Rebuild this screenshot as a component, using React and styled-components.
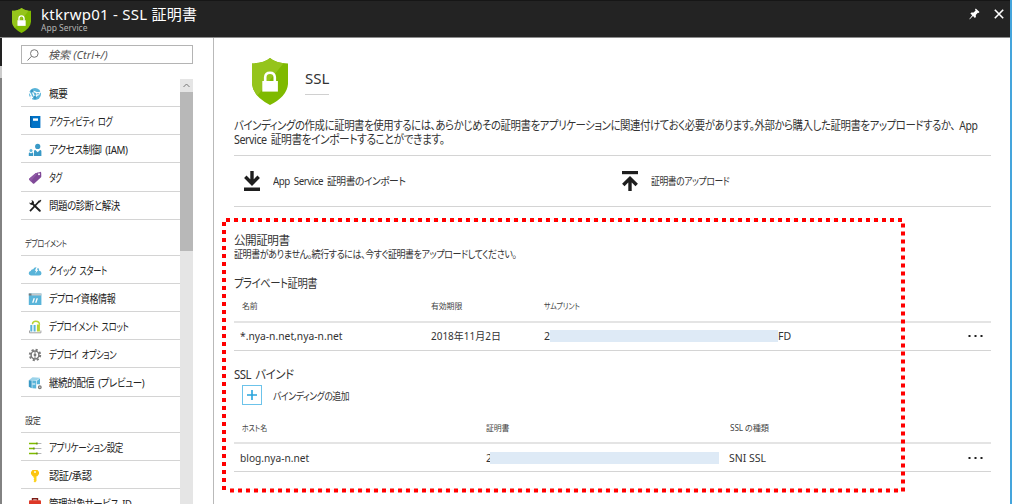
import styled, { createGlobalStyle } from "styled-components"

const menu = [
  {
    items: [
      { icon: 'overview', label: '概要', scale: 0.87 },
      { icon: 'log', label: 'アクティビティ ログ', scale: 0.74 },
      { icon: 'iam', label: 'アクセス制御 (IAM)', scale: 0.89 },
      { icon: 'tag', label: 'タグ', scale: 0.7 },
      { icon: 'tools', label: '問題の診断と解決', scale: 0.86 },
    ],
  },
  {
    title: 'デプロイメント',
    scale: 0.79,
    items: [
      { icon: 'cloud', label: 'クイック スタート', scale: 0.75 },
      { icon: 'credentials', label: 'デプロイ資格情報', scale: 0.82 },
      { icon: 'slots', label: 'デプロイメント スロット', scale: 0.755 },
      { icon: 'gear', label: 'デプロイ オプション', scale: 0.755 },
      { icon: 'delivery', label: '継続的配信 (プレビュー)', scale: 0.865 },
    ],
  },
  {
    title: '設定',
    scale: 0.9,
    items: [
      { icon: 'sliders', label: 'アプリケーション設定', scale: 0.775 },
      { icon: 'key', label: '認証/承認', scale: 0.93 },
      { icon: 'toolbox', label: '管理対象サービス ID', scale: 0.855 },
    ],
  },
]

const icons = {
  overview: (
    <>
      <circle cx='7' cy='7' r='6' fill='#59b4d9' />
      <path d='M3.8 3.6L10.6 6.4 6.8 10.6M3.800 3.600L6.800 10.600M10.600 6.400L13 4.500M6.800 10.600L2 10' stroke='#fff' strokeWidth='1.3' fill='none' />
      <path d='M1.300 5.200Q4 8.600 3.600 12' stroke='#fff' strokeWidth='1.2' fill='none' />
      <circle cx='10' cy='6.8' r='1.7' fill='#fff' />
      <circle cx='10' cy='6.8' r='.8' fill='#3999c6' />
      <circle cx='6.8' cy='10.4' r='1.6' fill='#3999c6' />
      <circle cx='4.2' cy='3.9' r='1.5' fill='#3999c6' />
    </>
  ),
  log: (
    <>
      <path d='M2 1h10.4v12H3.2L2 12z' fill='#0072c6' />
      <path d='M2 1h1.4v11H2z' fill='#005ba1' />
      <rect x='5' y='3.4' width='5' height='2.4' fill='#fff' />
    </>
  ),
  iam: (
    <>
      <circle cx='9.7' cy='3.4' r='2.6' fill='#3999c6' />
      <path d='M6 13V8.2q0-1.2 1.4-1.2l2.3 2.2L12 7q1.4 0 1.4 1.2V13z' fill='#3999c6' />
      <circle cx='3' cy='7.6' r='1.5' fill='#59b4d9' />
      <path d='M.8 13v-2.6q0-.9.9-.9l1.3 1.1 1.3-1.1q.9 0 .9.9V13z' fill='#3999c6' />
    </>
  ),
  tag: (
    <>
      <path d='M7.5 2.2l4.6-1.3q1-.2 1.1.8l.1 3.6q0 .7-.5 1.2l-6.5 6q-.8.7-1.4 0L1.2 8.8q-.6-.8.2-1.4z' fill='#804998' />
      <path d='M7.5 2.2L1.4 7.4q-.8.6-.2 1.4l1.6 1.7 7.4-9z' fill='#8f5aa6' />
      <circle cx='11' cy='3.2' r='1' fill='#fff' />
    </>
  ),
  tools: (
    <>
      <path d='M2 12.2L11.5 2' stroke='#1e1e1e' strokeWidth='1.7' />
      <path d='M4.2 4.4l7.6 7.4' stroke='#1e1e1e' strokeWidth='2' strokeLinecap='round' />
      <path d='M1.2 3.6Q1.4 6 4 6.1L6 4.2Q6.1 1.6 3.4 1.2L4.2 3 3 4.3z' fill='#1e1e1e' />
      <path d='M10.3 2.1L13 .8l.3.4-1.4 2.5z' fill='#1e1e1e' />
    </>
  ),
  cloud: (
    <>
      <path d='M3 11.4Q.7 11.3.7 9.2q0-2 2-2.2Q3.2 5 5.2 5.2 6.2 2.8 8.7 3.2q2.6.6 2.5 3.6 2.3.1 2.3 2.4 0 2.2-2.3 2.2z' fill='#59b4d9' />
      <path d='M8.8 2.5L6.8 6.8h1.5L7 10l3.4-4.2H8.8l1.8-3.3z' fill='#fff' />
    </>
  ),
  credentials: (
    <>
      <rect x='.8' y='1.5' width='12.6' height='11.5' fill='#59b4d9' />
      <path d='M.8 1.5h2.8v2H.8z' fill='#7a7a7a' />
      <path d='M3.6 1.5h9.8v2H3.6z' fill='#c5c9cb' />
      <path d='M6.3 6.2l-1.6 4.5M9.3 6.2l-1.6 4.5' stroke='#fff' strokeWidth='1.3' />
    </>
  ),
  slots: (
    <>
      <path d='M4.4 4.3Q4.6 1.3 7.8 1.3q3.6 0 3.7 3.5' fill='none' stroke='#b8d432' strokeWidth='1.4' />
      <path d='M2.3 5h2v6.5h-2zM5.6 5h2v6.5h-2z' fill='#59b4d9' />
      <path d='M8.9 4.5h3v7h-3z' fill='#b8d432' />
      <path d='M1.5 10.500v2.300h11.400v-2.300' fill='none' stroke='#a0a1a2' strokeWidth='1' />
    </>
  ),
  gear: (
    <>
      <circle cx='7' cy='7' r='5.2' fill='none' stroke='#7a7a7a' strokeWidth='2' strokeDasharray='2.1 1.98' />
      <circle cx='7' cy='7' r='3.9' fill='none' stroke='#7a7a7a' strokeWidth='1.5' />
      <circle cx='7' cy='7' r='1.4' fill='#7a7a7a' />
      <path d='M7 3v2.6M7 8.4V11' stroke='#7a7a7a' strokeWidth='1' />
    </>
  ),
  delivery: (
    <>
      <path d='M.8 4.2L4.5 1.2l7.5.6L8.2 4.8z' fill='#9bd3ea' />
      <path d='M.8 4.2l2.9.3v7.7L.8 10.8z' fill='#3999c6' />
      <path d='M4.3 4.6l3.9.3v7.5l-3.9-.2z' fill='#59b4d9' />
      <path d='M8.8 4.9L12 2.3v5.9H8.8z' fill='#59b4d9' />
      <path d='M4.3 8h3' stroke='#fff' strokeWidth='1' />
      <circle cx='11.8' cy='11.2' r='1.3' fill='none' stroke='#7a7a7a' strokeWidth='1.3' />
    </>
  ),
  sliders: (
    <>
      <path d='M1 2.5h12.4M1 7.5h12.4M1 12.5h12.4' stroke='#b4b6b8' strokeWidth='1' />
      <path d='M1 2.5h8M1 7.5h5M1 12.5h8' stroke='#7fba00' strokeWidth='1.6' />
      <path d='M9 1.5v2M6 6.5v2M9 11.5v2' stroke='#5d8a00' strokeWidth='1.2' />
    </>
  ),
  key: (
    <>
      <path d='M5.3 6h3.2v6.1L7 13.6l-1.5-1.4.8-1-.8-1 .8-1-1-1z' fill='#fcd116' />
      <path d='M4.5 1h5l1.5 2v2L9.300 7.200H4.700L3 5V3z' fill='#fcc40f' />
      <circle cx='7' cy='3' r='.9' fill='#fff' />
    </>
  ),
  toolbox: (
    <>
      <path d='M4.5 3.5V1.7h5v1.8' fill='none' stroke='#7d1c16' strokeWidth='1.4' />
      <rect x='1' y='3.3' width='12' height='9' rx='1' fill='#dd3827' />
      <path d='M1 7.3h12v1.2H1z' fill='#8c1d13' />
    </>
  ),
}

const Shield = ({ width, height }) => (
  <svg width={width} height={height} viewBox='0 0 36 47' preserveAspectRatio='none'>
    <path d='M18 0Q12 5.2 0 5.4V26Q1 38.5 18 47 35 38.5 36 26V5.4Q24 5.2 18 0z' fill='#7fba00' />
    <path d='M18 0Q12 5.2 0 5.4V26Q.5 32.5 5.5 37.5L31.5 5.2Q23 4.2 18 0z' fill='#95c41c' />
    <path d='M10.3 23h15.6v10.6H10.3z' fill='#fff' />
    <path d='M13.2 23.5v-4.3q.2-4.4 4.8-4.4t4.8 4.400v4.300' fill='none' stroke='#fff' strokeWidth='2.6' />
  </svg>
)

const Download = () => (
  <svg width='16' height='20' viewBox='0 0 16 20'>
    <path d='M8 0v12M1.3 5.8L8 12.5l6.7-6.7' fill='none' stroke='#1e1e1e' strokeWidth='3.4' />
    <path d='M0 16.5h16V20H0z' fill='#1e1e1e' />
  </svg>
)

const Upload = () => (
  <svg width='16' height='20' viewBox='0 0 16 20'>
    <path d='M0 0h16v3.2H0z' fill='#1e1e1e' />
    <path d='M8 20V8M1.3 14L8 7.3l6.7 6.7' fill='none' stroke='#1e1e1e' strokeWidth='3.4' />
  </svg>
)

const Dots = () => (
  <svg width='15' height='2' viewBox='0 0 15 2'>
    <path d='M.5 0h2v2h-2zM6.500 0h2v2h-2zM12.500 0h2v2h-2z' fill='#1e1e1e' />
  </svg>
)

const App = () => {
  return (
    <>
      <GlobalStyle />
      <Page>
        <Header>
          <Shield width={19} height={25} />
          <HeaderText>
            <HeaderTitle>ktkrwp01 - SSL 証明書</HeaderTitle>
            <HeaderSub>App Service</HeaderSub>
          </HeaderText>
          <HeaderIcons>
            <svg width='11' height='12' viewBox='0 0 11 12'>
              <path d='M6.8.5l3.7 3.6-.9.9-.8-.2-2 2.1.1 2.2-1 .9L4 8.1.8 11.3l-.4-.1.1-.4 2.7-3.5L1.4 5.5l1-1 2.2.1 2-2-.6-1z' fill='#fff' />
            </svg>
            <svg width='10' height='10' viewBox='0 0 10 10'>
              <path d='M.8.8l8.4 8.4M9.2.8L.8 9.2' stroke='#fff' strokeWidth='1.6' />
            </svg>
          </HeaderIcons>
        </Header>
        <Body>
          <Edge />
          <Sidebar>
            <Search>
              <svg width='12' height='12' viewBox='0 0 12 12'>
                <circle cx='7.3' cy='4.5' r='3.8' fill='none' stroke='#777' />
                <path d='M4.5 7.3L.5 11.5' stroke='#777' />
              </svg>
              <SearchText>検索 (Ctrl+/)</SearchText>
            </Search>
            <MenuArea>
              <Menu>
                {menu.map((group, i) => (
                  <div key={i}>
                    {group.title && (
                      <GroupTitle>
                        <Narrow $scale={group.scale}>{group.title}</Narrow>
                      </GroupTitle>
                    )}
                    {group.items.map((item) => (
                      <MenuItem key={item.label}>
                        <svg width='14' height='14' viewBox='0 0 14 14'>{icons[item.icon]}</svg>
                        <Narrow $scale={item.scale}>{item.label}</Narrow>
                      </MenuItem>
                    ))}
                  </div>
                ))}
              </Menu>
              <Scrollbar>
                <ScrollButton>
                  <svg width='7' height='5' viewBox='0 0 7 5'>
                    <path d='M.5 4l3-3 3 3' fill='none' stroke='#777' />
                  </svg>
                </ScrollButton>
                <Thumb />
              </Scrollbar>
            </MenuArea>
          </Sidebar>
          <Main>
            <Hero>
              <Shield width={36} height={47} />
              <HeroTitle>SSL</HeroTitle>
            </Hero>
            <Description>
              <Line $scale={0.868}>バインディングの作成に証明書を使用するには、あらかじめその証明書をアプリケーションに関連付けておく必要があります。外部から購入した証明書をアップロードするか、 App</Line>
              <Line $scale={0.895}>Service 証明書をインポートすることができます。</Line>
            </Description>
            <Commands>
              <Command>
                <Download />
                <Narrow $scale={0.93}>App Service 証明書のインポート</Narrow>
              </Command>
              <Command>
                <Upload />
                <Narrow $scale={0.84}>証明書のアップロード</Narrow>
              </Command>
            </Commands>

            <SectionTitle $top={26}><Narrow $scale={0.965}>公開証明書</Narrow></SectionTitle>
            <Note><Narrow $scale={0.86}>証明書がありません。続行するには、今すぐ証明書をアップロードしてください。</Narrow></Note>

            <SectionTitle $top={13}><Narrow $scale={0.86}>プライベート証明書</Narrow></SectionTitle>
            <HeadRow $cols='189px 113px 1fr' $height={32} $shift={-1}>
              <HeadCell $scale={0.93}>名前</HeadCell>
              <HeadCell $scale={0.93}>有効期限</HeadCell>
              <HeadCell $scale={0.82}>サムプリント</HeadCell>
            </HeadRow>
            <Row $cols='191px 113px 1fr 23px'>
              <Cell $scale={0.98}>*.nya-n.net,nya-n.net</Cell>
              <Cell $scale={0.95}>2018年11月2日</Cell>
              <Masked>2<Mask $width={228} />FD</Masked>
              <Dots />
            </Row>

            <SectionTitle $top={16}><Narrow $scale={0.95}>SSL バインド</Narrow></SectionTitle>
            <AddButton>
              <Plus>
                <svg width='10' height='10' viewBox='0 0 10 10'>
                  <path d='M5 0v10M0 5h10' stroke='#28a4dc' strokeWidth='1.6' />
                </svg>
              </Plus>
              <Narrow $scale={0.84}>バインディングの追加</Narrow>
            </AddButton>
            <HeadRow $cols='244px 244px 1fr' $height={38} $shift={2.5}>
              <HeadCell $scale={0.82}>ホスト名</HeadCell>
              <HeadCell $scale={0.93}>証明書</HeadCell>
              <HeadCell $scale={0.96}>SSL の種類</HeadCell>
            </HeadRow>
            <Row $cols='246px 243px 1fr 23px' $drop={2}>
              <Cell $scale={0.97}>blog.nya-n.net</Cell>
              <Masked>2<Mask $width={229} $pull={2} /></Masked>
              <span>SNI SSL</span>
              <Dots />
            </Row>
          </Main>
        </Body>
        <Highlight width='684' height='275' viewBox='0 0 684 275'>
          <path d='M4 2h677' />
          <path d='M2 4v269' />
          <path d='M681 5.5v269' />
          <path d='M8 272.5h669' />
        </Highlight>
      </Page>
    </>
  )
}

const GlobalStyle = createGlobalStyle`
  body {
    margin: 0;
    overflow: hidden;
    font-family: "Noto Sans", "Noto Sans CJK JP", sans-serif;
    font-feature-settings: "palt";
    color: #333;
  }

  * {
    box-sizing: border-box;
  }

  svg {
    display: block;
    flex-shrink: 0;
  }
`

const Narrow = styled.span`
  display: inline-block;
  transform: scaleX(${({ $scale }) => $scale});
  transform-origin: left center;
  letter-spacing: -0.5px;
  word-spacing: 2px;
`

const Page = styled.div`
  position: relative;
  display: flex;
  flex-direction: column;
  width: 1012px;
  height: 504px;
  overflow: hidden;
  background-color: #fff;
  border-right: 2px solid #45a5dc;
  white-space: nowrap;
`

const Header = styled.header`
  display: flex;
  align-items: center;
  gap: 10px;
  height: 38px;
  flex-shrink: 0;
  padding: 2px 6px 0 12px;
  background-color: #232323;
  border-top: 1px solid #161616;
  border-bottom: 1px solid #8c8c8c;
`

const HeaderText = styled.div`
  flex: 1;
  padding-bottom: 3px;
  color: #fff;
`

const HeaderTitle = styled.h1`
  margin: 0;
  font-size: 15px;
  font-weight: 400;
  line-height: 18px;
  letter-spacing: 0.25px;
`

const HeaderSub = styled.div`
  font-size: 8.5px;
  line-height: 10px;
  color: #b5b5b5;
`

const HeaderIcons = styled.div`
  display: flex;
  align-items: center;
  gap: 14px;
  padding-bottom: 12px;
`

const Body = styled.div`
  display: flex;
  flex: 1;
  min-height: 0;
`

const Edge = styled.div`
  width: 2px;
  flex-shrink: 0;
  background: linear-gradient(#222 28px, #ccc 28px, #ccc 40px, #828282 40px);
`

const Sidebar = styled.aside`
  display: flex;
  flex-direction: column;
  width: 212px;
  flex-shrink: 0;
  padding: 7px 20px 0 19px;
  border-right: 1px solid #b9b9b9;
`

const Search = styled.div`
  display: flex;
  align-items: center;
  gap: 9px;
  height: 19px;
  flex-shrink: 0;
  padding-left: 5px;
  border: 1px solid #b4b4b4;
`

const SearchText = styled.span`
  font-size: 11px;
  line-height: 17px;
  font-style: italic;
  letter-spacing: 0.1px;
  color: #555;
`

const MenuArea = styled.div`
  display: flex;
  flex: 1;
  min-height: 0;
  margin-top: 15px;
`

const Menu = styled.nav`
  flex: 1;
  overflow: hidden;
`

const MenuItem = styled.div`
  display: flex;
  align-items: center;
  gap: 7px;
  height: 28.15px;
  padding: 2.5px 0 0 7px;
  border-bottom: 1px solid #d4d4d4;
  font-size: 11px;
  line-height: 14px;
  color: #222;
`

const GroupTitle = styled.div`
  height: 36.2px;
  padding: 17px 0 0 4px;
  border-bottom: 1px solid #d4d4d4;
  font-size: 9px;
  line-height: 14px;
`

const Scrollbar = styled.div`
  width: 13px;
  flex-shrink: 0;
  background-color: #e5e5e5;
`

const ScrollButton = styled.div`
  display: flex;
  align-items: center;
  justify-content: center;
  height: 13px;
`

const Thumb = styled.div`
  height: 159px;
  background-color: #b8b8b8;
`

const Main = styled.main`
  flex: 1;
  min-width: 0;
  padding: 20px 19px 0 20px;
`

const Hero = styled.div`
  display: flex;
  gap: 17px;
  height: 61px;
  padding-left: 18px;
`

const HeroTitle = styled.h2`
  height: 37px;
  margin: 0;
  padding-top: 10px;
  border-bottom: 1px solid #d0d0d0;
  font-size: 15px;
  font-weight: 400;
  line-height: 20px;
`

const Description = styled.div`
  height: 36px;
  font-size: 12px;
  line-height: 14px;
`

const Line = styled(Narrow)`
  display: block;
`

const Commands = styled.div`
  display: grid;
  grid-template-columns: 378px 1fr;
  align-items: center;
  height: 52px;
  border-top: 1px solid #d4d4d4;
  border-bottom: 1px solid #d4d4d4;
`

const Command = styled.div`
  display: flex;
  align-items: center;
  gap: 13px;
  padding-left: 10px;
  font-size: 10.5px;
  line-height: 16px;
`

const SectionTitle = styled.h3`
  margin: ${({ $top }) => $top}px 0 0;
  font-size: 12px;
  font-weight: 400;
  line-height: 15px;
`

const Note = styled.div`
  height: 15px;
  font-size: 10.5px;
  line-height: 12px;
`

const HeadRow = styled.div`
  display: grid;
  grid-template-columns: ${({ $cols }) => $cols};
  align-items: center;
  height: ${({ $height }) => $height}px;
  padding-left: 8px;
  padding-top: ${({ $shift }) => ($shift > 0 ? $shift * 2 : 0)}px;
  padding-bottom: ${({ $shift }) => ($shift < 0 ? $shift * -2 : 0)}px;
  border-bottom: 2px solid #e4e4e4;
  font-size: 8.5px;
  color: #444;
`

const Cell = styled(Narrow)`
  letter-spacing: 0;
  word-spacing: 0;
`

const HeadCell = styled(Cell)`
  letter-spacing: -0.1px;
`

const Row = styled.div`
  display: grid;
  grid-template-columns: ${({ $cols }) => $cols};
  align-items: center;
  height: 28px;
  padding: ${({ $drop }) => $drop || 0}px 0 1px 6px;
  border-bottom: 1px solid #d4d4d4;
  font-size: 10.5px;
  line-height: 14px;
`

const Masked = styled.span`
  display: flex;
  align-items: center;
`

const Mask = styled.span`
  width: ${({ $width }) => $width}px;
  height: 12px;
  margin-left: ${({ $pull }) => -($pull || 0)}px;
  background-color: #deeaf6;
`

const AddButton = styled.div`
  display: flex;
  align-items: center;
  gap: 11px;
  height: 22px;
  margin-top: 2px;
  padding-left: 8px;
  font-size: 10.5px;
`

const Plus = styled.span`
  display: flex;
  align-items: center;
  justify-content: center;
  width: 20px;
  height: 20px;
  border: 1px solid #6cc3ea;
`

/* callout drawn over the certificate lists */
const Highlight = styled.svg`
  position: absolute;
  left: 222px;
  top: 218px;
  fill: none;
  stroke: #f00;
  stroke-width: 4;
  stroke-dasharray: 4 4;
  pointer-events: none;
`

export default App
